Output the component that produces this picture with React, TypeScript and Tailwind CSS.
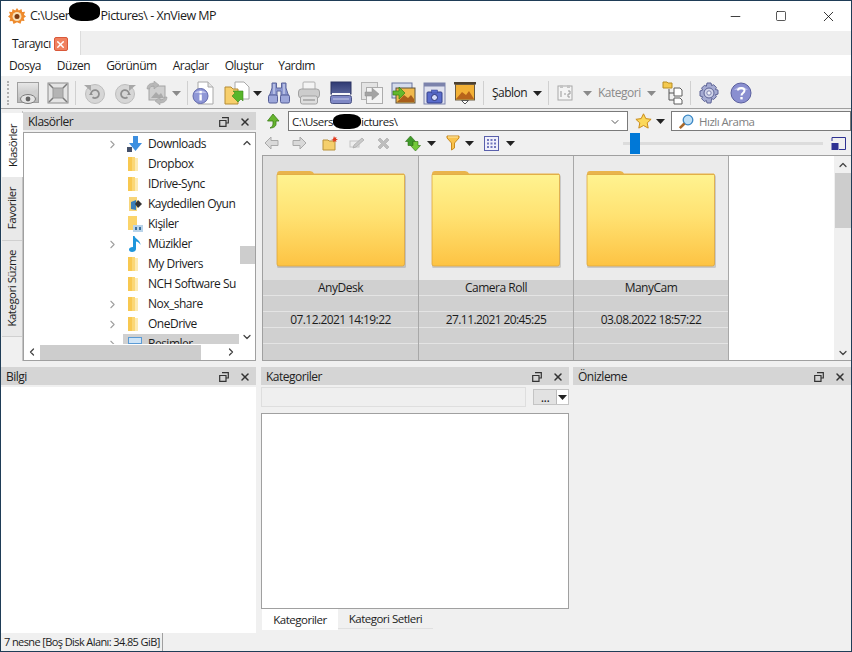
import React from 'react'
import { ChevronDown, ChevronLeft, ChevronRight, ChevronUp, Minus, Square, X } from 'lucide-react'

const Caret = ({ className = '' }: { className?: string }) => (
  <svg width="9" height="5" viewBox="0 0 9 5" className={className}>
    <path d="M0 0h9L4.500 5z" fill="currentColor" />
  </svg>
)

const Sep = ({ className = '' }: { className?: string }) => <div className={`h-[24px] w-px bg-[#d0d0d0] ${className}`} />

const FolderMini = () => (
  <svg width="10" height="16" viewBox="0 0 10 16" className="shrink-0">
    <path d="M0 1h4v14H0z" fill="#f8c850" />
    <path d="M4 1h3v14H4z" fill="#fbd775" />
    <path d="M7 2h3v13H7z" fill="#fdeab0" />
  </svg>
)

const ViewIcon = () => (
  <svg width="24" height="24" viewBox="0 0 24 24">
    <defs>
      <linearGradient id="vw" x1="0" y1="0" x2="0" y2="1">
        <stop offset="0" stopColor="#e8e8e8" />
        <stop offset="1" stopColor="#b5b5b5" />
      </linearGradient>
    </defs>
    <rect x="1.500" y="1.500" width="21" height="20" fill="url(#vw)" stroke="#a0a0a0" />
    <path d="M3 15c4-6 7-7 9-5s5 1 9-2v8H3z" fill="#cfcfcf" />
    <ellipse cx="12" cy="18" rx="7.500" ry="4.500" fill="#e4e4e4" stroke="#7c7c7c" />
    <circle cx="12" cy="18" r="2.400" fill="#646464" />
  </svg>
)
const FitIcon = () => (
  <svg width="22" height="22" viewBox="0 0 22 22">
    <rect x="1" y="1" width="20" height="20" fill="#e4e4e4" stroke="#8c8c8c" />
    <rect x="6" y="6" width="10" height="10" fill="#b4b4b4" stroke="#9a9a9a" />
    <path d="M2 2l4 4M20 2l-4 4M2 20l4-4M20 20l-4-4" stroke="#7a7a7a" strokeWidth="1.500" />
  </svg>
)
const RotateIcon = ({ flip = false }: { flip?: boolean }) => (
  <svg width="21" height="21" viewBox="0 0 21 21" className={flip ? '-scale-x-100' : ''}>
    <circle cx="11" cy="11" r="9.500" fill="#d6d6d6" stroke="#bdbdbd" />
    <path d="M7 11a4 4 0 1 1 1.500 3.200" fill="none" stroke="#8f8f8f" strokeWidth="1.800" />
    <path d="M0 2h7v6z" fill="#a8a8a8" />
    <path d="M5 12l2-2.500 2 2.500z" fill="#8f8f8f" />
  </svg>
)
const SwapIcon = () => (
  <svg width="24" height="24" viewBox="0 0 24 24">
    <rect x="4" y="5" width="16" height="14" fill="#cfcfcf" stroke="#a4a4a4" />
    <path d="M6 17l5-6 3 3 2-2 3 5z" fill="#aaaaaa" />
    <path d="M2 8c0-4 3-6 7-6V0l5 4-5 4V5C6 5 5 6 4.500 8z" fill="#b8b8b8" stroke="#9a9a9a" strokeWidth=".5" />
    <path d="M22 16c0 4-3 6-7 6v2l-5-4 5-4v3c3 0 4-1 4.500-3z" fill="#b8b8b8" stroke="#9a9a9a" strokeWidth=".5" />
  </svg>
)
const InfoIcon = () => (
  <svg width="22" height="24" viewBox="0 0 22 24">
    <path d="M6 1h10l5 5v17H6z" fill="#fff" stroke="#a8a8a8" />
    <path d="M16 1v5h5" fill="#e5e5e5" stroke="#a8a8a8" />
    <circle cx="8.500" cy="15" r="7.500" fill="#8f97d6" stroke="#6169ac" />
    <path d="M2.500 12a7 5 0 0 1 12 0z" fill="#bcc1ea" />
    <rect x="7.400" y="13.500" width="2.400" height="6" fill="#fff" />
    <rect x="7.400" y="10" width="2.400" height="2.300" fill="#fff" />
  </svg>
)
const OpenIcon = () => (
  <svg width="26" height="24" viewBox="0 0 26 24">
    <path d="M11 1h9l5 5v12H11z" fill="#fff" stroke="#a8a8a8" />
    <path d="M1 6h6l2 2h5v15H1z" fill="#f7cf6c" stroke="#b58c35" />
    <path d="M8 15l3-3-2-2h10v10l-2-2-3 3z" fill="#58b62a" stroke="#3a8618" strokeWidth=".6" />
  </svg>
)
const BinoIcon = () => (
  <svg width="24" height="22" viewBox="0 0 24 22">
    <path d="M5 1h4.500v5h5V1H19v5l3 9h-8V9h-4v6H2L5 6z" fill="#8b97d0" stroke="#5d669c" />
    <rect x="1.500" y="13" width="9" height="8" rx="1.500" fill="#9da7da" stroke="#555e98" />
    <rect x="13.500" y="13" width="9" height="8" rx="1.500" fill="#9da7da" stroke="#555e98" />
    <path d="M7 2v10M17 2v10" stroke="#dfe3f4" />
  </svg>
)
const PrinterIcon = () => (
  <svg width="24" height="24" viewBox="0 0 24 24">
    <rect x="6" y="1" width="12" height="8" rx="1" fill="#f4f4f4" stroke="#b0b0b0" />
    <rect x="1.500" y="8" width="21" height="9" rx="3" fill="#cccccc" stroke="#a2a2a2" />
    <rect x="3.500" y="15" width="17" height="8" rx="2" fill="#dedede" stroke="#a2a2a2" />
    <path d="M6 19h12" stroke="#a0a0a0" strokeWidth="1.500" />
  </svg>
)
const ScannerIcon = () => (
  <svg width="24" height="24" viewBox="0 0 24 24">
    <defs>
      <linearGradient id="sc" x1="0" y1="0" x2="0" y2="1">
        <stop offset="0" stopColor="#2f3a73" />
        <stop offset="1" stopColor="#586399" />
      </linearGradient>
    </defs>
    <rect x="2" y="1" width="20" height="12" fill="url(#sc)" stroke="#2c3463" />
    <rect x="3" y="12" width="18" height="2.500" fill="#fafafa" />
    <rect x="1.500" y="14.500" width="21" height="8" rx="2" fill="#7f88c5" stroke="#4c5585" />
    <path d="M4 18h16" stroke="#c4c9e8" />
  </svg>
)
const DocArrowIcon = () => (
  <svg width="24" height="24" viewBox="0 0 24 24">
    <rect x="1.500" y="1.500" width="16" height="17" fill="#e4e4e4" stroke="#b4b4b4" />
    <rect x="6.500" y="6.500" width="16" height="16" fill="#f4f4f4" stroke="#acacac" />
    <path d="M5 11h7V7l7 6-7 6v-4H5z" fill="#a4a4a4" stroke="#8f8f8f" strokeWidth=".5" />
  </svg>
)
const ImageArrowIcon = () => (
  <svg width="25" height="22" viewBox="0 0 25 22">
    <rect x="1" y="1" width="20" height="15" fill="#d5dcec" stroke="#68759f" />
    <rect x="5" y="6" width="19" height="15" fill="#f0b94c" stroke="#5c5240" />
    <path d="M6 20l7-7 4 3 3-3 3 4v3z" fill="#a95f1b" />
    <path d="M2 9h6V5l6 6-6 6v-4H2z" fill="#63b82c" stroke="#367f14" strokeWidth=".7" />
  </svg>
)
const CameraIcon = () => (
  <svg width="23" height="23" viewBox="0 0 23 23">
    <rect x="1" y="1" width="21" height="21" fill="#e0e2ef" stroke="#7c83ac" />
    <rect x="1" y="1" width="21" height="3.500" fill="#7c83ac" />
    <rect x="4" y="10" width="15" height="11" rx="1" fill="#5a6ccc" stroke="#34408a" />
    <rect x="8.500" y="8" width="6" height="3" fill="#5a6ccc" stroke="#34408a" strokeWidth=".5" />
    <circle cx="11.500" cy="15.500" r="3" fill="#d5dcfa" stroke="#2a3274" />
  </svg>
)
const SlideIcon = () => (
  <svg width="24" height="24" viewBox="0 0 24 24">
    <rect x="1" y="1" width="22" height="2.500" fill="#4c4030" />
    <rect x="2.500" y="3.500" width="19" height="15.500" fill="#f3b136" stroke="#6a5a3f" />
    <path d="M3 18l6-7 4 3 3-4 5 8z" fill="#b8641a" />
    <path d="M8.500 19.500h7l-3.500 3.500z" fill="#fff" stroke="#555" />
  </svg>
)
const CalendarIcon = () => (
  <svg width="18" height="18" viewBox="0 0 18 18">
    <rect x="2" y="2" width="14" height="14" fill="#f4f4f4" stroke="#a8a8a8" />
    <rect x="4" y="1" width="3" height="3" fill="#c4c4c4" />
    <rect x="11" y="1" width="3" height="3" fill="#c4c4c4" />
    <path d="M5 7v6M8 10h2M12 7h2v3h-2v3h2" stroke="#999" fill="none" />
  </svg>
)
const TreeIcon = () => (
  <svg width="22" height="24" viewBox="0 0 22 24">
    <path d="M1 1h4l1 1h4v5H1z" fill="#f4c94f" stroke="#b68c22" />
    <path d="M7 8v11h5M7 12h5" stroke="#555" fill="none" />
    <path d="M12 7h6l2 2v6h-8zM12 17h6l2 2v4h-8z" fill="#fff" stroke="#5c5c5c" />
  </svg>
)
const GearIcon = () => (
  <svg width="22" height="22" viewBox="0 0 22 22">
    <path
      d="M9 1h4l.6 2.600 2-.9 2.800 2.800-1 2 2.600.6v4l-2.600.6 1 2-2.800 2.800-2-1L13 21H9l-.6-2.500-2 1-2.800-2.800 1-2L2 14V9l2.600-.9-1-2 2.800-2.800 2 .9z"
      fill="#a5abd2"
      stroke="#5c6295"
    />
    <circle cx="11" cy="11" r="5" fill="#d2d5ea" stroke="#5c6295" />
    <circle cx="11" cy="11" r="2.200" fill="#f2f3fa" stroke="#7a80ad" />
  </svg>
)
const HelpIcon = () => (
  <svg width="22" height="22" viewBox="0 0 22 22">
    <circle cx="11" cy="11" r="10" fill="#8a8fd0" stroke="#5a5f9e" />
    <path d="M4 8a8 6 0 0 1 14 0z" fill="#b4b8e6" />
    <path d="M8 8.500c0-3.500 6.500-3.500 6.500 0 0 2.500-3 2.500-3 5" stroke="#fff" strokeWidth="2" fill="none" />
    <rect x="10.300" y="15" width="2.400" height="2.400" fill="#fff" />
  </svg>
)
const UpGreen = () => (
  <svg width="16" height="16" viewBox="0 0 16 16">
    <path d="M8 1l6 7h-3v3c0 2-2 4-6 4 2-1 3-2.500 3-4V8H2.500z" fill="#67b52f" stroke="#3a7c16" strokeWidth=".8" />
  </svg>
)
const NavArrow = ({ flip = false }: { flip?: boolean }) => (
  <svg width="15" height="14" viewBox="0 0 15 14" className={flip ? '-scale-x-100' : ''}>
    <path d="M1 7l6-6v3.500h7v5H7V13z" fill="#d9d9d9" stroke="#a9a9a9" />
  </svg>
)
const NewFolder = () => (
  <svg width="16" height="15" viewBox="0 0 16 15">
    <path d="M1 4h5l1 1h6v9H1z" fill="#f5cf6c" stroke="#b8913a" />
    <path d="M12 0l.8 1.700L14.600 1l-.7 1.800L16 3.500l-2 .7.500 1.800-1.800-.9-1.200 1.500-.2-2L9 4l2-.8z" fill="#e03b1f" />
  </svg>
)
const EditGray = () => (
  <svg width="16" height="14" viewBox="0 0 16 14">
    <rect x="1" y="5" width="9" height="6" fill="#eee" stroke="#c4c4c4" />
    <path d="M4 12l1-3 8-7 2 2-8 7z" fill="#c9c9c9" stroke="#a8a8a8" strokeWidth=".7" />
  </svg>
)
const DeleteGray = () => (
  <svg width="13" height="13" viewBox="0 0 13 13">
    <path d="M1 3l2-2 3.500 3.500L10 1l2 2-3.500 3.500L12 10l-2 2-3.500-3.500L3 12l-2-2 3.500-3.500z" fill="#bdbdbd" stroke="#a8a8a8" strokeWidth=".6" />
  </svg>
)
const SortIcon = () => (
  <svg width="16" height="17" viewBox="0 0 16 17">
    <path d="M5.500 1l5 5.500H8v4H3v-4H.5z" fill="#3f9a2a" stroke="#2e6f12" strokeWidth=".6" />
    <path d="M10.500 16l-5-5.500H8v-4h5v4h2.500z" fill="#74c93a" stroke="#2e6f12" strokeWidth=".6" />
  </svg>
)
const Funnel = () => (
  <svg width="14" height="16" viewBox="0 0 14 16">
    <path d="M1 1h12v2L8.500 8v5l-3 2V8L1 3z" fill="#f9c24c" stroke="#c98a1f" />
    <path d="M2 1.500h10v1H2z" fill="#fde9a8" />
  </svg>
)
const GridIcon = () => (
  <svg width="15" height="15" viewBox="0 0 15 15">
    <rect x=".5" y=".5" width="14" height="14" fill="#f0f0fb" stroke="#5a60ac" />
    <path d="M3 3h2v2H3zM6.500 3h2v2h-2zM10 3h2v2h-2zM3 6.500h2v2H3zM6.500 6.500h2v2h-2zM10 6.500h2v2h-2zM3 10h2v2H3zM6.500 10h2v2h-2zM10 10h2v2h-2z" fill="#7277bd" />
  </svg>
)
const StarIcon = () => (
  <svg width="17" height="16" viewBox="0 0 17 16">
    <path d="M8.500.8l2.300 4.800 5.300.7-3.900 3.600 1 5.200-4.700-2.600-4.700 2.600 1-5.200L.9 6.300l5.300-.7z" fill="#fbd85a" stroke="#c98b1b" />
  </svg>
)
const SearchIcon = () => (
  <svg width="16" height="16" viewBox="0 0 16 16">
    <circle cx="10" cy="6" r="4.800" fill="#bfe0f7" stroke="#3c87c4" strokeWidth="1.300" />
    <path d="M6.500 9.500L1.800 14.200" stroke="#a9682a" strokeWidth="2.600" />
  </svg>
)

const PanelHead = ({ title }: { title: string }) => (
  <div className="flex h-[18px] shrink-0 items-center bg-[#d5d5d5] pl-[5px] pr-[5px] pt-[1px] text-[12px] text-[#222]">
    <span className="flex-1">{title}</span>
    <svg width="10" height="10" viewBox="0 0 10 10" className="mr-[10px]">
      <path d="M3 .7h6.300V6H7M.7 3.500H7V9.300H.7zM.7 3.500h6.300" fill="none" stroke="#333" strokeWidth="1.200" />
    </svg>
    <X size={12} strokeWidth={3} className="text-[#333]" />
  </div>
)

const treeRows = [
  { name: 'Downloads', arrow: true, icon: 'download' },
  { name: 'Dropbox' },
  { name: 'IDrive-Sync' },
  { name: 'Kaydedilen Oyun', icon: 'games' },
  { name: 'Kişiler', icon: 'people' },
  { name: 'Müzikler', arrow: true, icon: 'music' },
  { name: 'My Drivers' },
  { name: 'NCH Software Su' },
  { name: 'Nox_share', arrow: true },
  { name: 'OneDrive', arrow: true },
  { name: 'Resimler', arrow: true, icon: 'pictures', selected: true },
]

const TreeGlyph = ({ icon }: { icon?: string }) => {
  if (icon === 'download')
    return (
      <svg width="16" height="16" viewBox="0 0 16 16" className="-ml-[2px] shrink-0">
        <path d="M7 0h5v7h4l-6.500 8L3 7h4z" fill="#3d8fe0" />
        <rect x="1" y="11" width="5" height="5" fill="#44506a" />
      </svg>
    )
  if (icon === 'games')
    return (
      <svg width="16" height="16" viewBox="0 0 16 16" className="shrink-0">
        <path d="M1 1h8v14H1z" fill="#f7d57a" />
        <path d="M3 6l5-2v10l-5-1z" fill="#3b7fb8" />
        <path d="M10 4l4 4-4 4-3-4z" fill="#333" />
      </svg>
    )
  if (icon === 'people')
    return (
      <svg width="16" height="16" viewBox="0 0 16 16" className="shrink-0">
        <path d="M0 0h9v14H0z" fill="#fbd46a" />
        <rect x="5" y="9" width="10" height="7" fill="#b9d4ea" />
        <path d="M7 11h2v3H7zM11 11h2v3h-2z" fill="#3a6f9c" />
      </svg>
    )
  if (icon === 'music')
    return (
      <svg width="14" height="18" viewBox="0 0 14 18" className="shrink-0">
        <path d="M5 1h1.500c.5 3 6 4 6 9-1-2-3-3.500-4.500-3.500V14c0 2-2 3-4 3s-3-1-3-2.500S2.500 12 5 12z" fill="#1e96dc" />
      </svg>
    )
  if (icon === 'pictures')
    return (
      <svg width="14" height="14" viewBox="0 0 14 14" className="shrink-0">
        <rect x="0" y="0" width="14" height="14" fill="#5b9bd5" />
        <rect x="1" y="1" width="12" height="5" fill="#cfe4f6" />
      </svg>
    )
  return <FolderMini />
}

const Tree = () => (
  <div className="flex min-w-0 flex-1 flex-col">
    <div className="flex min-h-0 flex-1">
      <div className="min-w-0 flex-1 overflow-hidden pt-[1px]">
        {treeRows.map((r) => (
          <div key={r.name} className="flex h-[20px] items-center">
            <div className="flex w-[99px] shrink-0 justify-end pr-[4px]">
              {r.arrow && <ChevronRight size={13} className="text-[#a0a0a0]" strokeWidth={2} />}
            </div>
            <div className={`flex h-full min-w-0 flex-1 items-center pl-[5px] ${r.selected ? 'bg-[#d0d0d0]' : ''}`}>
              <div className="flex w-[20px] shrink-0">
                <TreeGlyph icon={r.icon} />
              </div>
              <span className="whitespace-nowrap">{r.name}</span>
            </div>
          </div>
        ))}
      </div>
      <div className="flex w-[16px] shrink-0 flex-col items-center">
        <ChevronUp size={12} strokeWidth={2.500} className="mt-[4px] text-[#444]" />
        <div className="mt-[97px] h-[18px] w-[15px] bg-[#cdcdcd]" />
        <div className="flex-1" />
        <ChevronDown size={12} strokeWidth={2.500} className="mb-[1px] text-[#444]" />
      </div>
    </div>
    <div className="flex h-[16px] shrink-0 items-center">
      <ChevronLeft size={12} strokeWidth={2.500} className="ml-[2px] text-[#444]" />
      <div className="ml-[2px] h-[15px] w-[161px] bg-[#cdcdcd]" />
      <ChevronRight size={12} strokeWidth={2.500} className="ml-[24px] text-[#444]" />
    </div>
  </div>
)

const Folder = () => (
  <svg width="130" height="100" viewBox="0 0 130 100" className="mt-[13px]">
    <defs>
      <linearGradient id="fg" x1="0" y1="0" x2="0" y2="1">
        <stop offset="0" stopColor="#fff390" />
        <stop offset="0.45" stopColor="#ffe272" />
        <stop offset="1" stopColor="#fdc343" />
      </linearGradient>
    </defs>
    <rect x="1" y="6" width="129" height="93" rx="1.500" fill="#000" opacity=".14" />
    <path d="M1 5Q1 2 4 2h30q3 0 4 2.500h90V8H1z" fill="#e9b44c" />
    <path d="M1 5.500h127.500v89.500q0 2-2 2H3q-2 0-2-2z" fill="url(#fg)" stroke="#dda63d" strokeWidth=".8" />
  </svg>
)

const Thumb = ({ name, date, dark, width }: { name: string; date: string; dark?: boolean; width: string }) => (
  <div className={`flex flex-col items-center border-r border-[#a8a8a8] ${width} ${dark ? 'bg-[#e0e0e0]' : 'bg-[#ebebeb]'}`}>
    <div className="h-[124px] shrink-0">
      <Folder />
    </div>
    <div className="flex w-full flex-1 flex-col bg-[#d0d0d0] text-center">
      <div className="h-[16px] border-b border-[#e4e4e4] leading-[15px]">{name}</div>
      <div className="h-[16px] border-b border-[#e4e4e4]" />
      <div className="h-[16px] border-b border-[#e4e4e4] leading-[15px] tracking-[-0.6px]">{date}</div>
      <div className="h-[16px] border-b border-[#e4e4e4]" />
      <div className="flex-1" />
    </div>
  </div>
)

export default function App() {
  return (
    <div className="flex h-[652px] w-[852px] flex-col overflow-hidden border border-[#1f3d57] bg-[#f0f0f0] text-[12px] tracking-[-0.5px] text-[#1c1c1c] [font-family:'Open_Sans','Noto_Sans',sans-serif]">
      {/* Title bar */}
      <div className="flex h-[30px] shrink-0 items-center bg-white">
        <svg width="18" height="18" viewBox="0 0 18 18" className="ml-[7px]">
          <path d="M9 1l1.800 2.400L13.500 2l.6 3 3-.2-1.200 2.900L18 9.500l-2.300 1.500.8 3-3-.3-1 3-3.500-1.500L5.500 17l-1-3-3 .3.800-3L0 9.500l2.100-1.800L1 4.800l3 .2.600-3 2.700 1.400z" fill="#ee8a2c" />
          <circle cx="9" cy="9.500" r="4.500" fill="#f9dfb4" />
          <circle cx="9" cy="9.500" r="2.500" fill="#7d3a10" />
        </svg>
        <span className="ml-[4px] flex items-center whitespace-nowrap text-[12.5px]">
          C:\User
          <span className="relative -top-[5px] h-[19px] w-[31px] rounded-[40%] bg-black" />
          Pictures\ - XnView MP
        </span>
        <div className="flex-1" />
        <Minus size={15} strokeWidth={1.200} className="mr-[32px] text-black" />
        <Square size={12} strokeWidth={1.300} className="mr-[33px] text-black" />
        <X size={17} strokeWidth={1.100} className="mr-[14px] text-black" />
      </div>

      {/* Tabs */}
      <div className="flex h-[24px] shrink-0 bg-[#efefef]">
        <div className="flex w-[80px] items-center border-r border-[#dcdcdc] bg-white pl-[11px] pt-[2px]">
          <span className="text-[12px]">Tarayıcı</span>
          <div className="ml-[3px] flex h-[14px] w-[14px] items-center justify-center rounded-[2px] border border-[#d9593a] bg-[#f0815f]">
            <X size={11} strokeWidth={3} className="text-white" />
          </div>
        </div>
      </div>

      {/* Menu */}
      <div className="flex h-[21px] shrink-0 items-center bg-white pl-[8px] text-[12px]">
        <span>Dosya</span>
        <span className="ml-[16px]">Düzen</span>
        <span className="ml-[16px]">Görünüm</span>
        <span className="ml-[16px]">Araçlar</span>
        <span className="ml-[16px]">Oluştur</span>
        <span className="ml-[15px]">Yardım</span>
      </div>

      {/* Main toolbar */}
      <div className="flex h-[33px] shrink-0 items-center border-b border-[#a0a0a0] bg-[#f0f0f0] pt-[2px]">
        <div className="ml-[6px] h-[24px] w-[3px] border-l-2 border-dotted border-[#b0b0b0]" />
        <div className="ml-[6px]"><ViewIcon /></div>
        <div className="ml-[7px]"><FitIcon /></div>
        <Sep className="ml-[6px]" />
        <div className="ml-[8px]"><RotateIcon /></div>
        <div className="ml-[10px]"><RotateIcon flip /></div>
        <div className="ml-[9px]"><SwapIcon /></div>
        <Caret className="ml-[3px] text-[#8a8a8a]" />
        <Sep className="ml-[6px]" />
        <div className="ml-[4px]"><InfoIcon /></div>
        <div className="ml-[10px]"><OpenIcon /></div>
        <Caret className="ml-[3px] text-[#222]" />
        <div className="ml-[5px]"><BinoIcon /></div>
        <div className="ml-[6px]"><PrinterIcon /></div>
        <div className="ml-[8px]"><ScannerIcon /></div>
        <div className="ml-[7px]"><DocArrowIcon /></div>
        <div className="ml-[7px]"><ImageArrowIcon /></div>
        <div className="ml-[7px]"><CameraIcon /></div>
        <div className="ml-[7px]"><SlideIcon /></div>
        <Sep className="ml-[6px]" />
        <span className="ml-[8px] w-[36px]">Şablon</span>
        <Caret className="ml-[5px] text-[#222]" />
        <Sep className="ml-[6px]" />
        <div className="ml-[7px]"><CalendarIcon /></div>
        <Caret className="ml-[9px] text-[#8a8a8a]" />
        <span className="ml-[6px] w-[44px] text-[#8a8a8a]">Kategori</span>
        <Caret className="ml-[5px] text-[#8a8a8a]" />
        <div className="ml-[6px]"><TreeIcon /></div>
        <Sep className="ml-[6px]" />
        <div className="ml-[7px]"><GearIcon /></div>
        <div className="ml-[10px]"><HelpIcon /></div>
      </div>

      {/* Upper area */}
      <div className="flex h-[252px] shrink-0 pt-[2px]">
        {/* Left dock */}
        <div className="ml-[1px] flex w-[254px] shrink-0">
          <div className="flex w-[21px] shrink-0 flex-col border-r border-[#c4c4c4] pt-[2px] text-[11.5px]">
            <div className="mr-[-1px] flex h-[64px] items-center justify-center bg-white">
              <span className="rotate-180 [writing-mode:vertical-rl]">Klasörler</span>
            </div>
            <div className="flex h-[64px] items-center justify-center border-b border-[#d0d0d0] bg-[#e9e9e9]">
              <span className="rotate-180 [writing-mode:vertical-rl]">Favoriler</span>
            </div>
            <div className="flex h-[96px] items-center justify-center border-b border-[#d0d0d0] bg-[#e9e9e9]">
              <span className="rotate-180 [writing-mode:vertical-rl]">Kategori Süzme</span>
            </div>
          </div>
          <div className="flex min-w-0 flex-1 flex-col pt-[1px]">
            <PanelHead title="Klasörler" />
            <div className="mt-[2px] flex min-h-0 flex-1 border border-[#a0a0a0] bg-white">
              <Tree />
            </div>
          </div>
        </div>

        {/* Right side */}
        <div className="ml-[6px] flex min-w-0 flex-1 flex-col">
          <div className="flex h-[21px] shrink-0 items-start">
            <div className="ml-[2px] w-[24px] pl-[1px] pt-[2px]"><UpGreen /></div>
            <div className="flex h-[20px] w-[340px] items-center border border-[#7a7a7a] bg-white pl-[3px] pr-[6px] pt-[1px] text-[11.5px]">
              <span className="flex flex-1 items-center whitespace-nowrap">
                C:\Users
                <span className="h-[15px] w-[28px] rounded-[40%] bg-black" />
                ictures\
              </span>
              <ChevronDown size={12} className="text-[#555]" />
            </div>
            <div className="ml-[7px] pt-[2px]"><StarIcon /></div>
            <Caret className="ml-[4px] mt-[8px] text-[#222]" />
            <div className="ml-[6px] flex h-[20px] flex-1 items-center border border-[#7a7a7a] bg-white pl-[6px] pt-[1px] text-[11.5px] text-[#808080]">
              <SearchIcon />
              <span className="ml-[5px]">Hızlı Arama</span>
            </div>
          </div>
          <div className="flex h-[23px] shrink-0 items-center pb-[1px]">
            <div className="ml-[2px]"><NavArrow /></div>
            <div className="ml-[13px]"><NavArrow flip /></div>
            <div className="ml-[15px]"><NewFolder /></div>
            <div className="ml-[11px]"><EditGray /></div>
            <div className="ml-[12px]"><DeleteGray /></div>
            <div className="ml-[15px]"><SortIcon /></div>
            <Caret className="ml-[6px] text-[#222]" />
            <div className="ml-[10px]"><Funnel /></div>
            <Caret className="ml-[5px] text-[#222]" />
            <div className="ml-[10px]"><GridIcon /></div>
            <Caret className="ml-[7px] text-[#222]" />
            <div className="relative ml-[108px] h-[3px] w-[200px] bg-[#dcdcdc]">
              <div className="absolute left-[7px] top-[-9px] h-[21px] w-[10px] bg-[#0078d7]" />
            </div>
            <svg width="15" height="13" viewBox="0 0 15 13" className="ml-[8px]">
              <path d="M1 4V.5h13.500v12H8" fill="none" stroke="#2e3192" />
              <rect x=".5" y="6" width="7" height="7" fill="#2e3192" />
            </svg>
          </div>
          <div className="flex min-h-0 flex-1 border-y border-l border-[#a0a0a0] bg-white">
            <Thumb name="AnyDesk" date="07.12.2021 14:19:22" dark width="w-[156px]" />
            <Thumb name="Camera Roll" date="27.11.2021 20:45:25" width="w-[155px]" />
            <Thumb name="ManyCam" date="03.08.2022 18:57:22" width="w-[155px]" />
            <div className="flex-1" />
            <div className="flex w-[17px] shrink-0 flex-col items-center bg-[#f0f0f0]">
              <ChevronUp size={12} strokeWidth={2.500} className="mt-[3px] text-[#444]" />
              <div className="mt-[2px] h-[55px] w-[16px] bg-[#cdcdcd]" />
              <div className="flex-1" />
              <ChevronDown size={12} strokeWidth={2.500} className="mb-[1px] text-[#444]" />
            </div>
          </div>
        </div>
      </div>

      {/* Lower docks */}
      <div className="flex min-h-0 flex-1 pt-[6px]">
        <div className="flex w-[255px] shrink-0 flex-col">
          <PanelHead title="Bilgi" />
          <div className="mt-[2px] flex-1 bg-white" />
        </div>
        <div className="ml-[5px] flex w-[308px] shrink-0 flex-col">
          <PanelHead title="Kategoriler" />
          <div className="mt-[2px] flex h-[20px] shrink-0 items-center">
            <div className="h-full w-[265px] border border-[#dedede] bg-[#efefef]" />
            <div className="ml-[7px] flex h-[16px] w-[36px] border border-[#c4c4c4] bg-[#e2e2e2]">
              <span className="flex-1 text-center text-[13px] leading-[14px]">...</span>
              <div className="flex w-[12px] items-center justify-center border-l border-[#bbb] bg-white">
                <Caret className="text-[#222]" />
              </div>
            </div>
          </div>
          <div className="mt-[6px] min-h-0 flex-1 border border-[#a0a0a0] bg-white" />
          <div className="flex h-[24px] shrink-0 text-[11.5px]">
            <div className="ml-[1px] flex h-[21px] w-[76px] items-center justify-center bg-white">Kategoriler</div>
            <div className="flex h-[20px] w-[95px] items-center justify-center border-b border-[#e0e0e0]">Kategori Setleri</div>
          </div>
        </div>
        <div className="ml-[4px] flex min-w-0 flex-1 flex-col">
          <PanelHead title="Önizleme" />
        </div>
      </div>

      {/* Status bar */}
      <div className="flex h-[18px] shrink-0 items-center">
        <span className="border-r border-[#a0a0a0] pl-[3px] pr-[2px] text-[11px] leading-[18px] tracking-[-0.6px]">7 nesne [Boş Disk Alanı: 34.85 GiB]</span>
      </div>
    </div>
  )
}
